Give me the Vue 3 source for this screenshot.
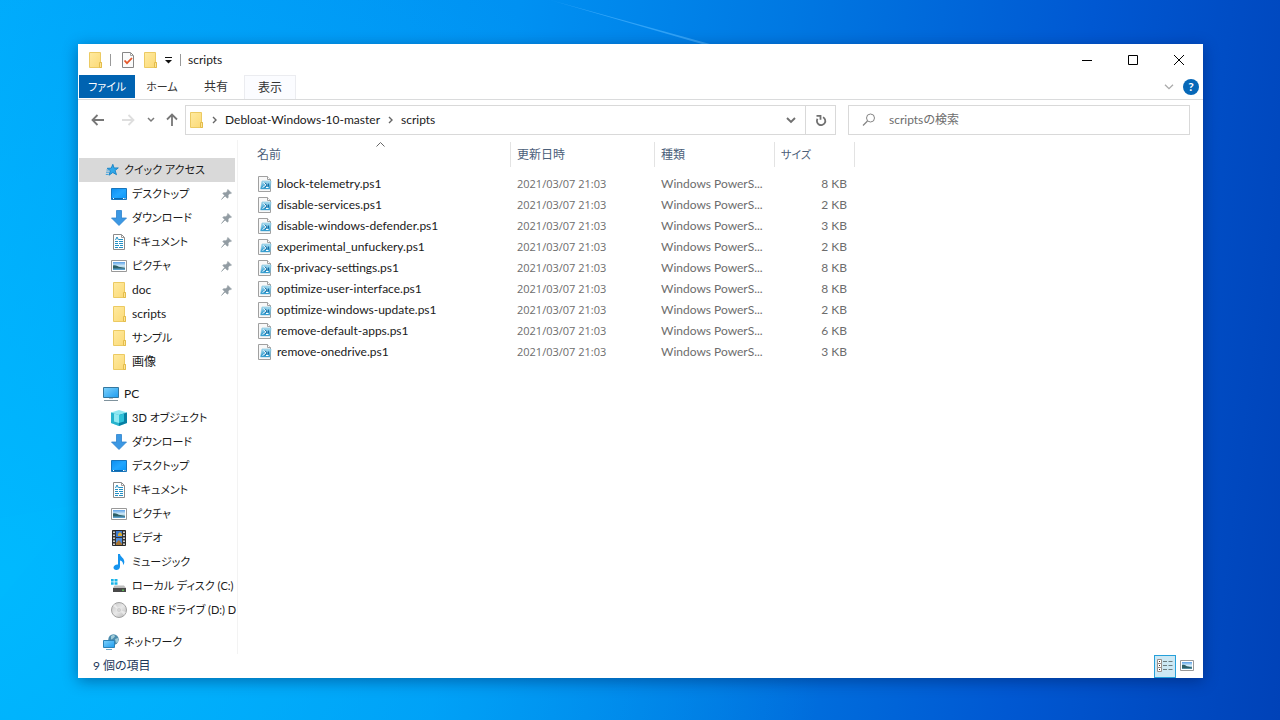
<script setup>
import { ref } from 'vue'

const search = ref('')
const tabs = ['ホーム', '共有', '表示']
const isKana = (s) => /[ァ-ヺ]/.test(s)
const groups = [
  {
    label: 'クイック アクセス', icon: 'star', selected: true,
    items: [
      { label: 'デスクトップ', icon: 'desktop', pinned: true },
      { label: 'ダウンロード', icon: 'download', pinned: true },
      { label: 'ドキュメント', icon: 'document', pinned: true },
      { label: 'ピクチャ', icon: 'picture', pinned: true },
      { label: 'doc', icon: 'folder', pinned: true },
      { label: 'scripts', icon: 'folder' },
      { label: 'サンプル', icon: 'folder' },
      { label: '画像', icon: 'folder' }
    ]
  },
  {
    label: 'PC', icon: 'pc',
    items: [
      { label: '3D オブジェクト', icon: 'cube' },
      { label: 'ダウンロード', icon: 'download' },
      { label: 'デスクトップ', icon: 'desktop' },
      { label: 'ドキュメント', icon: 'document' },
      { label: 'ピクチャ', icon: 'picture' },
      { label: 'ビデオ', icon: 'video' },
      { label: 'ミュージック', icon: 'music' },
      { label: 'ローカル ディスク (C:)', icon: 'drive' },
      { label: 'BD-RE ドライブ (D:) D', icon: 'disc' }
    ]
  },
  { label: 'ネットワーク', icon: 'network', items: [] }
]
const files = [
  ['block-telemetry.ps1', 8],
  ['disable-services.ps1', 2],
  ['disable-windows-defender.ps1', 3],
  ['experimental_unfuckery.ps1', 2],
  ['fix-privacy-settings.ps1', 8],
  ['optimize-user-interface.ps1', 8],
  ['optimize-windows-update.ps1', 2],
  ['remove-default-apps.ps1', 6],
  ['remove-onedrive.ps1', 3]
]
</script>

<template>
  <div class="desktop">
    <svg class="sprite" width="0" height="0" aria-hidden="true">
      <defs>
        <linearGradient id="g-folder" x1="0" y1="0" x2="1" y2="1">
          <stop offset="0" stop-color="#ffeaa0" /><stop offset="1" stop-color="#fbd975" />
        </linearGradient>
        <linearGradient id="g-blue" x1="0" y1="0" x2="1" y2="1">
          <stop offset="0" stop-color="#0c8ef0" /><stop offset=".5" stop-color="#22a6ff" /><stop offset="1" stop-color="#0796f8" />
        </linearGradient>
        <linearGradient id="g-screen" x1="0" y1="0" x2="1" y2="1">
          <stop offset="0" stop-color="#7fd2fb" /><stop offset="1" stop-color="#1e9cf0" />
        </linearGradient>
        <linearGradient id="g-pic" x1="0" y1="0" x2="0" y2="1">
          <stop offset="0" stop-color="#5aa0e6" /><stop offset=".5" stop-color="#d4ecf8" /><stop offset="1" stop-color="#3c7c93" />
        </linearGradient>
        <linearGradient id="g-ps" x1="0" y1="0" x2="0" y2="1">
          <stop offset="0" stop-color="#b4e2f2" /><stop offset="1" stop-color="#128bc8" />
        </linearGradient>
        <linearGradient id="g-disc" x1="0" y1="0" x2="1" y2="1">
          <stop offset="0" stop-color="#c4c4c4" /><stop offset=".5" stop-color="#e8e8e8" /><stop offset="1" stop-color="#b4b4b4" />
        </linearGradient>
      </defs>
      <symbol id="i-folder" viewBox="0 0 16 16">
        <path d="M2.500.5h11v10h1v5h-12z" fill="url(#g-folder)" stroke="#ecca62" />
        <path d="M12.500 10.500h2v5h-2z" fill="#ffe594" stroke="#e3bc4c" />
      </symbol>
      <symbol id="i-check" viewBox="0 0 16 16">
        <path d="M2.500.5h8l3 3v12h-11z" fill="#fbfbfb" stroke="#868686" />
        <path d="M10.500.5v3h3" fill="none" stroke="#a5a5a5" />
        <path d="M4.500 8.500l2.500 2.700L12 6" fill="none" stroke="#e4572a" stroke-width="1.800" />
      </symbol>
      <symbol id="i-star" viewBox="0 0 16 16">
        <path d="M9.800 2.300l1.300 3.700 4.200-.1-3.200 2.600 1.400 4.200-3.700-2.200-3.800 2.700 1.300-4.500L4.200 6.300l4-.1z" fill="#2fa8ea" stroke="#1781c4" stroke-width=".9" />
        <path d="M3.500 8h2.500M3 10.200h3M2.800 12.400h2.700" stroke="#3b9fdb" />
      </symbol>
      <symbol id="i-desktop" viewBox="0 0 16 16">
        <path d="M.5 2.500h15v11H.5z" fill="url(#g-blue)" stroke="#1975bb" />
        <path d="M1 12.500h14" stroke="#0869b1" />
        <path d="M2 12.500h1M12 12.500h1M13.500 12.500h1" stroke="#fff" />
      </symbol>
      <symbol id="i-download" viewBox="0 0 16 16">
        <path d="M5.500.5h5v7.500h5L8 15.500.5 8h5z" fill="#3c98e3" stroke="#2d83ce" stroke-width=".8" />
      </symbol>
      <symbol id="i-document" viewBox="0 0 16 16">
        <path d="M2.500.5h8l3 3v12h-11z" fill="#fff" stroke="#8b8b8b" />
        <path d="M10.500.5v3h3" fill="none" stroke="#9b9b9b" />
        <path d="M4.500 6l1.500-3 1.500 3M8 5.500h4M4 7.500h3M8 7.500h4M4 9.500h3M8 9.500h4M4 11.500h4M9 11.500h3M4 13.500h3M8 13.500h4" fill="none" stroke="#2490c4" />
      </symbol>
      <symbol id="i-picture" viewBox="0 0 16 16">
        <path d="M.5 2.500h15v11H.5z" fill="#fff" stroke="#999" />
        <path d="M2 4h12v8H2z" fill="url(#g-pic)" />
        <path d="M2 7.500c3-1 5 1.500 7 1.500l5 1v1H2z" fill="#2d5f66" />
        <path d="M2 10.500h12V12H2z" fill="#5a9fcb" />
      </symbol>
      <symbol id="i-pc" viewBox="0 0 16 16">
        <path d="M.5 1.500h15v10H.5z" fill="url(#g-screen)" stroke="#34779f" />
        <path d="M6 12.500h4" stroke="#b9c4ca" />
        <path d="M1 14.500h14" stroke="#7f929d" />
      </symbol>
      <symbol id="i-cube" viewBox="0 0 16 16">
        <path d="M8 0l8 2.500v10.500L8 16l-8-3V2.500z" fill="#8ee7f1" />
        <path d="M0 2.500L8 5v11l-8-3z" fill="#27b3cd" />
        <path d="M8 5l8-2.500V13l-8 3z" fill="#087fa3" />
        <path d="M3 3.500l5 1.500V13l-5-1.500z" fill="#8fe9f2" />
        <path d="M8 5l5-1.500v8L8 13z" fill="#2cc0d8" />
      </symbol>
      <symbol id="i-video" viewBox="0 0 16 16">
        <path d="M1.500.5h13v15h-13z" fill="#343434" stroke="#292929" />
        <path d="M5 1h6v6H5z" fill="#3b78ce" /><path d="M5 8h6v7H5z" fill="#4c8bdc" />
        <path d="M7 4l2-2 2 2v2H7z" fill="#d8ac32" /><path d="M5 13l3-3 3 4v1H5z" fill="#a87533" />
        <path d="M3 1.500v14M13 1.500v14" stroke="#fff" stroke-width="1.500" stroke-dasharray="1.500 1.500" />
      </symbol>
      <symbol id="i-music" viewBox="0 0 16 16">
        <path d="M7 0h2c.2 3 4.800 4 4.300 8.500-.2 1.200-.7 2-1.300 2.500.3-2.800-.7-3.900-3-4.500v6.200C9 14.700 7.300 16 5.300 16 3.500 16 2.500 15 2.500 13.600c0-2 2.300-3.500 4.500-3.100z" fill="#1694ee" />
      </symbol>
      <symbol id="i-drive" viewBox="0 0 16 16">
        <path d="M0 1h2.700v2.500H0zM3.500 1h3v2.500h-3zM0 4.300h2.700v2.500H0zM3.500 4.300h3v2.500h-3z" fill="#17b4e8" />
        <path d="M3.500 7.500H13l2 2.500H2z" fill="#bebebe" /><path d="M2 10h13v4H2z" fill="#494949" />
        <path d="M11 12.200h2" stroke="#62e554" />
      </symbol>
      <symbol id="i-disc" viewBox="0 0 16 16">
        <circle cx="8" cy="8" r="7.500" fill="url(#g-disc)" stroke="#a2a2a2" />
        <path d="M8 8L2 4l2-2zM8 8l5 5 2-3z" fill="#f8f8f8" opacity=".6" />
        <circle cx="8" cy="8" r="2.500" fill="#d2d2d2" stroke="#e8e8e8" /><circle cx="8" cy="8" r="1" fill="#fff" stroke="#aaa" stroke-width=".5" />
      </symbol>
      <symbol id="i-network" viewBox="0 0 16 16">
        <circle cx="10.500" cy="5.500" r="5.200" fill="#4b8bad" />
        <path d="M8 2l3-1.500 1 2-2 2-2 1zM12 5l3-1v4l-2 1z" fill="#9fcbd8" />
        <path d="M.5 6.500h11v7H.5z" fill="url(#g-screen)" stroke="#2b83b8" />
        <path d="M3 15.500h6" stroke="#6fa7c6" />
      </symbol>
      <symbol id="i-pin" viewBox="0 0 12 12">
        <path d="M7.500.5l4 4-1.200.5-.6-.2-2 2 .2 2.400-1 .8L4.500 7.500.6 11.400 4 7 2 5l.8-1 2.400.2 2-2L7 1.500z" fill="#929ca3" stroke="#929ca3" stroke-width=".7" />
      </symbol>
      <symbol id="i-ps" viewBox="0 0 16 16">
        <path d="M1.500.5h9l3 3v12h-12z" fill="#f8f8f8" stroke="#a0a0a0" />
        <path d="M10.500.5v3h3" fill="#fff" stroke="#a0a0a0" />
        <path d="M5 5h9l-1 8H3.500z" fill="url(#g-ps)" stroke="#7cc0dc" stroke-width=".6" />
        <path d="M6.500 6.500l2.800 2.500-3.800 2.500M9 11.500h2.500" fill="none" stroke="#fff" />
        <path d="M7.800 6.800L10.300 9l-2.500 1.800M11.500 7.500v3" fill="none" stroke="#14639a" stroke-width=".9" />
      </symbol>
    </svg>

    <svg class="rays" viewBox="0 0 1280 720" preserveAspectRatio="none" aria-hidden="true">
      <path d="M550 0l160 44h-8L550 0z" fill="#52b7ff" opacity=".6" />
      <path d="M0 518l80-14L0 600z" fill="#00c8ff" opacity=".1" />
    </svg>

    <main class="window">
      <header class="titlebar">
        <svg class="icon"><use href="#i-folder" /></svg>
        <span class="divider"></span>
        <button class="quick" aria-label="プロパティ"><svg class="icon"><use href="#i-check" /></svg></button>
        <button class="quick folder" aria-label="新しいフォルダー"><svg class="icon"><use href="#i-folder" /></svg></button>
        <button class="quick more" aria-label="カスタマイズ">
          <svg width="7" height="8" viewBox="0 0 7 8"><path d="M0 1.500h7" stroke="#111" /><path d="M0 4h7L3.500 7.500z" fill="#111" /></svg>
        </button>
        <span class="divider"></span>
        <h1>scripts</h1>
        <div class="controls">
          <button aria-label="最小化"><svg width="10" height="10"><path d="M0 5.500h10" stroke="#000" /></svg></button>
          <button aria-label="最大化"><svg width="10" height="10"><path d="M.5.5h9v9h-9z" fill="none" stroke="#000" /></svg></button>
          <button aria-label="閉じる"><svg width="10" height="10"><path d="M0 0l10 10M10 0L0 10" stroke="#000" /></svg></button>
        </div>
      </header>

      <nav class="ribbon" aria-label="リボン">
        <button class="file kana">ファイル</button>
        <button v-for="t in tabs" :key="t" :class="{ hover: t === '表示', kana: isKana(t) }">{{ t }}</button>
        <button class="expand" aria-label="リボンの展開"><svg width="10" height="6"><path d="M1 .7l4 4 4-4" fill="none" stroke="#aaa" stroke-width="1.300" /></svg></button>
        <button class="help" aria-label="ヘルプ">?</button>
      </nav>

      <div class="address-row">
        <button class="nav back" aria-label="戻る"><svg width="14" height="12"><path d="M13 6H1.500M6.500 1l-5 5 5 5" fill="none" stroke="#777" stroke-width="1.800" /></svg></button>
        <button class="nav next" aria-label="進む"><svg width="14" height="12"><path d="M1 6h11.500M7.500 1l5 5-5 5" fill="none" stroke="#dedede" stroke-width="1.800" /></svg></button>
        <button class="nav recent" aria-label="履歴"><svg width="8" height="6"><path d="M1 1l3 3 3-3" fill="none" stroke="#7a7a7a" stroke-width="1.500" /></svg></button>
        <button class="nav up" aria-label="上へ"><svg width="12" height="14"><path d="M6 13V1.500M1 6.500l5-5 5 5" fill="none" stroke="#777" stroke-width="1.800" /></svg></button>
        <div class="address">
          <svg class="icon"><use href="#i-folder" /></svg>
          <svg class="sep" width="6" height="8"><path d="M1 1l3 3-3 3" fill="none" stroke="#666" stroke-width="1.400" /></svg>
          <button class="crumb">Debloat-Windows-10-master</button>
          <svg class="sep" width="6" height="8"><path d="M1 1l3 3-3 3" fill="none" stroke="#666" stroke-width="1.400" /></svg>
          <button class="crumb">scripts</button>
          <button class="history" aria-label="以前の場所"><svg width="10" height="7"><path d="M1 1l4 4 4-4" fill="none" stroke="#707070" stroke-width="1.900" /></svg></button>
          <button class="refresh" aria-label="更新"><svg width="12" height="13" viewBox="0 0 12 13"><path d="M8 3.200a4.200 4.200 0 1 1-5.500 1.600M1.500 1.800h4v4" fill="none" stroke="#707070" stroke-width="1.800" /></svg></button>
        </div>
        <label class="search">
          <svg width="14" height="14"><circle cx="8.500" cy="5" r="4" fill="none" stroke="#858585" /><path d="M5.500 8L1 12.500" stroke="#858585" stroke-width="1.200" /></svg>
          <input v-model="search" type="search" placeholder="scriptsの検索" aria-label="scriptsの検索" />
        </label>
      </div>

      <div class="body">
        <nav class="tree" aria-label="ナビゲーション">
          <section v-for="g in groups" :key="g.label">
            <a href="#" class="root" :class="{ selected: g.selected, kana: isKana(g.label) }"><svg class="icon"><use :href="'#i-' + g.icon" /></svg><span>{{ g.label }}</span></a>
            <a v-for="i in g.items" :key="i.label" href="#" :class="{ kana: isKana(i.label) }">
              <svg class="icon"><use :href="'#i-' + i.icon" /></svg><span>{{ i.label }}</span>
              <svg v-if="i.pinned" class="pin"><use href="#i-pin" /></svg>
            </a>
          </section>
        </nav>
        <section class="files">
          <table>
            <colgroup><col class="c-name" /><col class="c-date" /><col class="c-type" /><col class="c-size" /></colgroup>
            <thead>
              <tr>
                <th aria-sort="ascending"><svg class="sort" width="9" height="5"><path d="M.5 4.500l4-4 4 4" fill="none" stroke="#666" /></svg>名前</th>
                <th>更新日時</th><th>種類</th><th class="kana">サイズ</th>
              </tr>
            </thead>
            <tbody>
              <tr v-for="[name, size] in files" :key="name">
                <td><div class="name"><svg class="icon"><use href="#i-ps" /></svg>{{ name }}</div></td>
                <td class="date">2021/03/07 21:03</td>
                <td>Windows PowerS...</td>
                <td class="size">{{ size }} KB</td>
              </tr>
            </tbody>
          </table>
        </section>
      </div>

      <footer class="status">
        <span>9 個の項目</span>
        <button class="view active" aria-label="詳細"><svg width="18" height="14" viewBox="0 0 18 14"><path d="M1.500.5h4v4h-4zM1.500 4.500h4v4h-4zM1.500 8.500h4v4h-4z" fill="#fff" stroke="#9a8f8a" /><path d="M3.500 2v1M3.500 6v1M3.500 10v1" stroke="#333" /><path d="M7 2.500h4M12.500 2.500h4M7 6.500h4M12.500 6.500h4M7 10.500h4M12.500 10.500h4" stroke="#6c7c80" /></svg></button>
        <button class="view" aria-label="大アイコン"><svg width="14" height="14" viewBox="0 0 14 14"><path d="M.5 1.500h13v10H.5z" fill="#fff" stroke="#999" /><path d="M2 3h10v7H2z" fill="url(#g-pic)" /><path d="M2 6c3-1 4 1.500 6 1.500l4 1V9H2z" fill="#2d5f66" /></svg></button>
      </footer>
    </main>
  </div>
</template>

<style>
html, body { margin: 0; height: 100%; }
</style>

<style scoped>
* { box-sizing: border-box; }
.desktop {
  position: relative;
  min-height: 100vh;
  display: flex;
  padding: 44px 77px 42px 78px;
  overflow: hidden;
  background:
    radial-gradient(ellipse 65% 100% at 0% 80%, rgba(0, 188, 255, .85), rgba(0, 188, 255, 0)),
    linear-gradient(97deg, #00a8fb 0%, #009ef8 12%, #0091f2 38%, #0078e2 58%, #0058d2 80%, #0042b8 100%);
  font-family: Lato, "Noto Sans CJK JP", sans-serif;
  font-size: 12px;
  line-height: 16px;
  font-feature-settings: "palt";
  color: #1a1a1a;
}
.sprite { position: absolute; }
.rays { position: absolute; inset: 0; width: 100%; height: 100%; }
.window {
  position: relative;
  flex: 1;
  min-width: 0;
  display: flex;
  flex-direction: column;
  background: #fff;
  box-shadow: 0 3px 14px rgba(0, 20, 70, .42);
}
button, input { font: inherit; font-feature-settings: inherit; color: inherit; border: 0; padding: 0; margin: 0; background: none; }
button { display: flex; align-items: center; justify-content: center; }
svg { display: block; flex: none; }
.icon { width: 16px; height: 16px; }
.titlebar { display: flex; align-items: center; height: 31px; padding-left: 9px; }
.divider { width: 1px; height: 12px; background: #999; margin: 0 9px 0 7px; }
.quick.folder { margin: 0 7px 0 6px; }
.quick.more + .divider { margin: 0 7px 0 8px; }
h1 { margin: 0; font-size: 12px; font-weight: 400; }
.controls { margin-left: auto; display: flex; align-self: stretch; margin-right: 1px; }
.controls button { width: 46px; }
.ribbon { display: flex; align-items: stretch; height: 25px; padding-left: 1px; border-bottom: 1px solid #dadbdc; }
.ribbon > button { width: 54px; color: #333; }
.ribbon > .file { width: 56px; background: #0063b1; color: #fff; margin-bottom: 1px; }
.ribbon > .hover { width: 52px; margin-left: 1px; border: 1px solid #ebecf0; border-bottom: 0; background: #fbfcff; }
.ribbon > .expand { margin-left: auto; width: 20px; }
.ribbon > .help { align-self: center; width: 16px; height: 16px; margin: 0 4px; border-radius: 50%; background: #0768b8; color: #fff; font-weight: 700; }
.address-row { display: flex; align-items: center; height: 40px; padding: 0 13px; }
.nav { height: 24px; width: 14px; }
.nav.next { margin-left: 16px; }
.nav.recent { margin-left: 9px; }
.nav.up { margin-left: 7px; }
.address { flex: 1; display: flex; align-items: center; height: 30px; margin-left: 6px; border: 1px solid #d9d9d9; min-width: 0; }
.address .icon { margin-left: 2px; }
.sep { margin: 0 7px 0 8px; }
.history { width: 28px; margin-left: auto; height: 28px; }
.refresh { width: 30px; height: 28px; border-left: 1px solid #d9d9d9; }
.search { flex: 0 1 342px; display: flex; align-items: center; height: 30px; margin-left: 12px; padding-left: 13px; border: 1px solid #d9d9d9; min-width: 0; }
.search input { flex: 1; min-width: 0; margin-left: 13px; outline: 0; appearance: none; }
.search input::placeholder { color: #6d6d6d; opacity: 1; }
.body { flex: 1; display: flex; min-height: 0; }
.tree { width: 160px; flex: none; padding: 18px 2px 0 1px; border-right: 1px solid #f3f3f3; }
.tree section + section { margin-top: 8px; }
.tree a { display: flex; align-items: center; height: 24px; padding-left: 32px; color: #1a1a1a; text-decoration: none; white-space: nowrap; }
.tree a.root { padding-left: 24px; }
.tree a.selected { background: #d9d9d9; }
.tree span { margin-left: 5px; flex: none; }
.kana, .ribbon > .kana { font-size: 11px; }
.pin { width: 11px; height: 11px; margin-left: auto; margin-right: 3px; }
.files { flex: 1; padding: 2px 0 0 12px; min-width: 0; }
table { border-collapse: separate; border-spacing: 0; table-layout: fixed; width: 605px; }
.c-name { width: 261px; }
.c-date { width: 144px; }
.c-type { width: 120px; }
.c-size { width: 80px; }
th { position: relative; height: 25px; padding: 0 0 0 6px; text-align: left; font-weight: 400; color: #4c607a; border-right: 1px solid #e3e3e3; }
th:first-child { padding-left: 7px; }
.sort { position: absolute; left: 50%; top: 0; margin-left: -4px; }
td { height: 21px; padding: 0 0 0 6px; color: #6d6d6d; white-space: nowrap; }
tbody tr:first-child td { padding-top: 6px; height: 27px; }
td.date { font-family: "Open Sans", sans-serif; font-size: 11px; }
td.size { text-align: right; padding-right: 8px; }
.name { display: flex; align-items: center; gap: 4px; color: #1a1a1a; padding-left: 1px; }
.status { display: flex; align-items: center; height: 24px; padding: 0 5px 0 15px; color: #1e395b; }
.status span { margin-right: auto; }
.view { width: 22px; height: 23px; }
.view.active { border: 1px solid #26a0da; background: #cce8f4; }
</style>
